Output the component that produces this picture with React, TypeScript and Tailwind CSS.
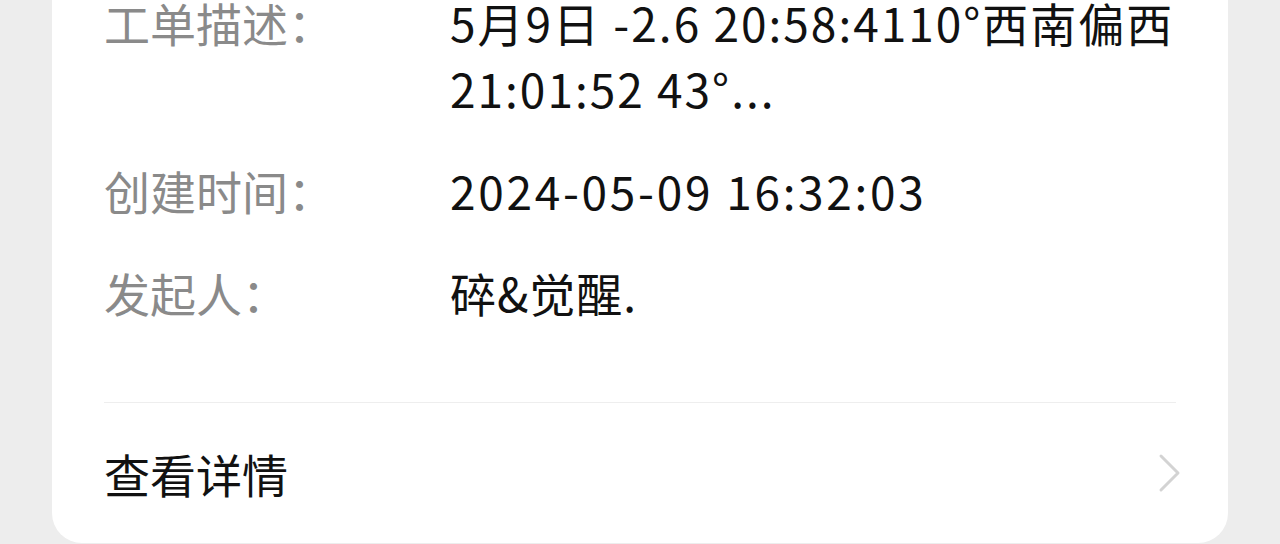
import React from "react";

const rows = [
  {
    label: "工单描述：",
    value: "5月9日 -2.6 20:58:4110°西南偏西 21:01:52 43°...",
    tracking: "tracking-[2px]",
  },
  { label: "创建时间：", value: "2024-05-09 16:32:03", tracking: "tracking-[2.7px]" },
  { label: "发起人：", value: "碎&觉醒.", tracking: "tracking-[1px]" },
];

export default function App() {
  return (
    <div
      className="h-[544px] overflow-hidden bg-[#ededed] px-[52px]"
      style={{ fontFamily: '"Noto Sans CJK SC", "Noto Sans", sans-serif' }}
    >
      <div className="-mt-[11px] rounded-b-[30px] bg-white px-[52px]">
        {/* info rows */}
        <div className="flex flex-col gap-[36px] pb-[77px]">
          {rows.map((row) => (
            <div key={row.label} className="flex text-[46px] leading-[66px]">
              <div className="w-[346px] shrink-0 text-[#8a8a8a]">{row.label}</div>
              <div className={`flex-1 text-[#111] ${row.tracking}`}>{row.value}</div>
            </div>
          ))}
        </div>

        <div className="h-px bg-[#eeeeee]" />

        {/* footer link */}
        <div className="flex h-[140px] items-center justify-between">
          <span className="text-[46px] text-[#111]">查看详情</span>
          <svg
            width="26"
            height="40"
            viewBox="0 0 26 40"
            fill="none"
            className="-mr-[6px]"
          >
            <polyline
              points="5,3 22,20 5,37"
              stroke="#d3d3d3"
              strokeWidth="3"
              strokeLinecap="round"
              strokeLinejoin="round"
            />
          </svg>
        </div>
      </div>
    </div>
  );
}
